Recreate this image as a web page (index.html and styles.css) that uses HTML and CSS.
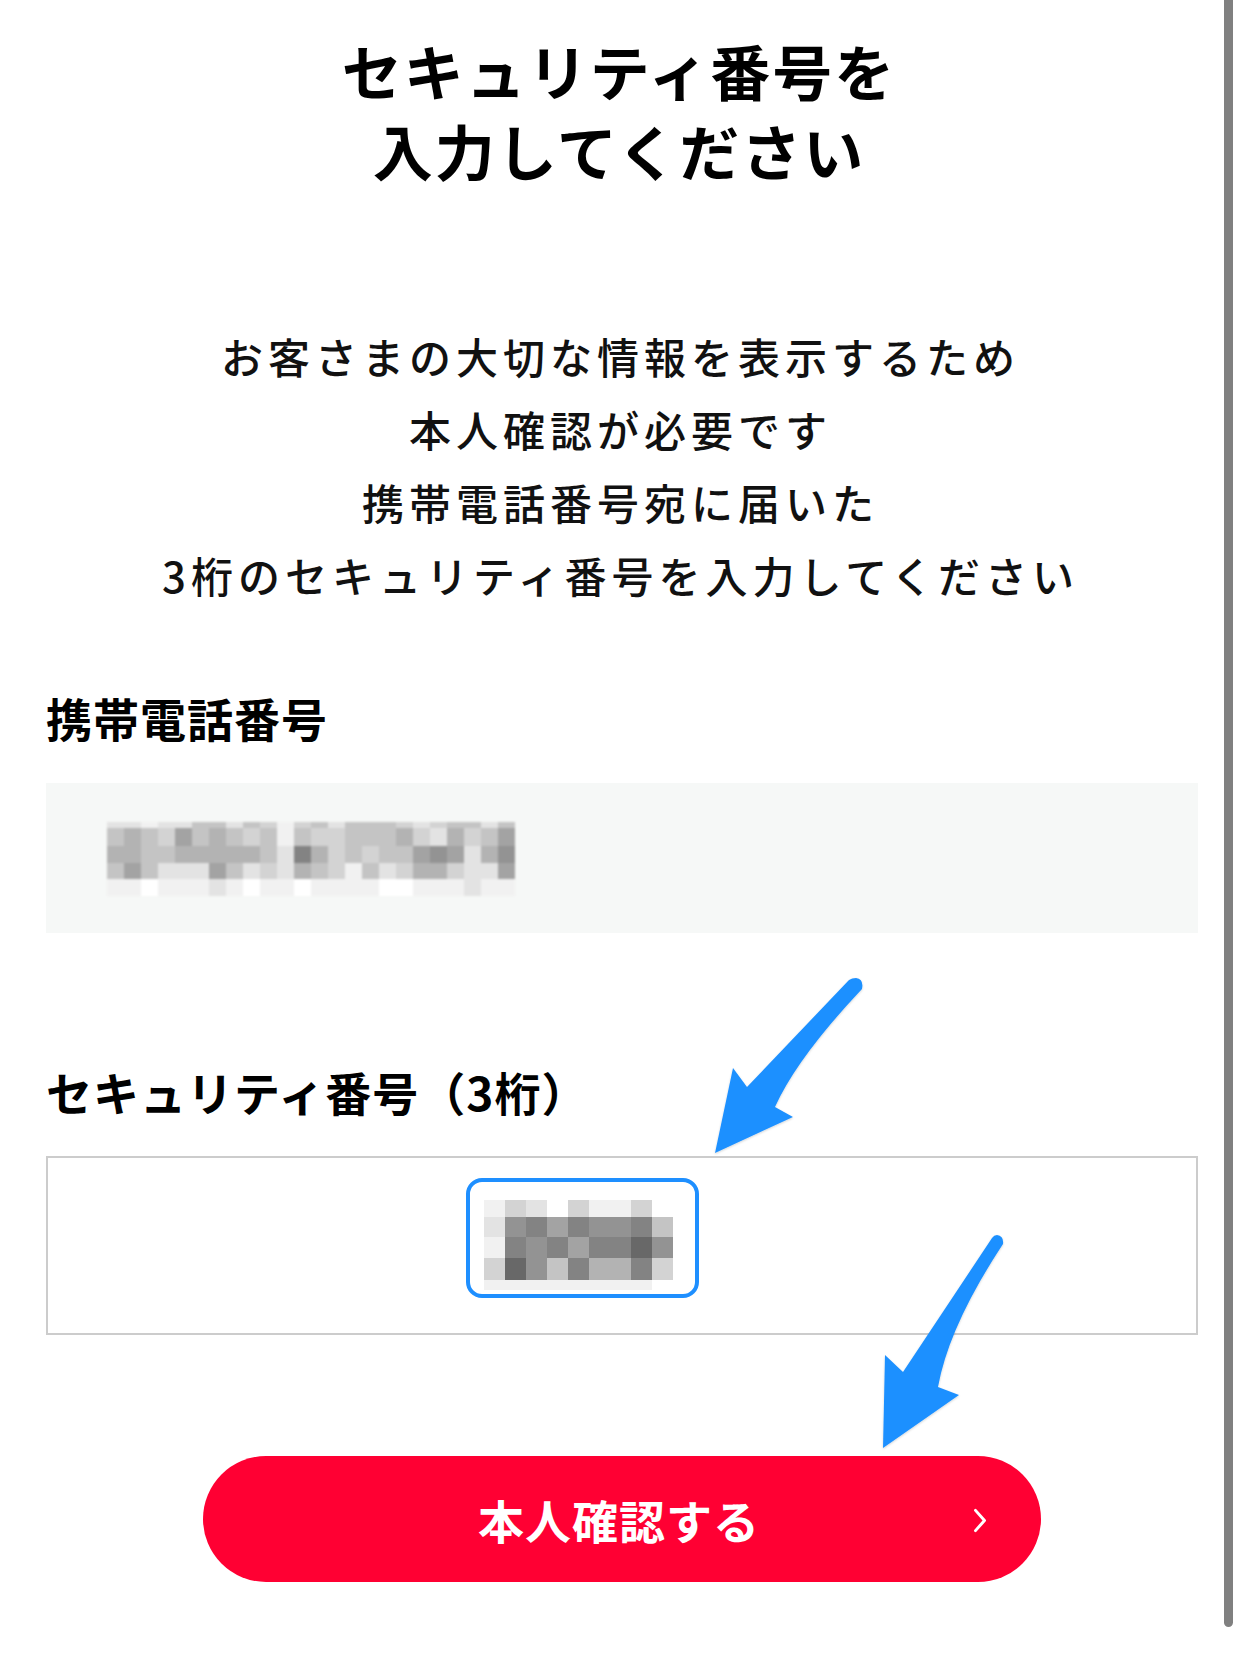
FILE: index.html
```html
<!DOCTYPE html>
<html lang="ja">
<head>
<meta charset="utf-8">
<title>セキュリティ番号を入力してください</title>
<link rel="stylesheet" href="styles.css">
</head>
<body>
<div class="page">
  <main class="content">
    <h1 class="title">セキュリティ番号を<br>入力してください</h1>
    <p class="lead">お客さまの大切な情報を表示するため<br>本人確認が必要です<br>携帯電話番号宛に届いた<br>3桁のセキュリティ番号を入力してください</p>

    <section class="field">
      <h2 class="label">携帯電話番号</h2>
      <div class="readonly">
        <div class="mosaic phone">
          <i class="s2"></i><i class="s2"></i><i class="s1"></i><i class="s2"></i><i class="s2"></i><i class="s4"></i><i class="s4"></i><i class="s2"></i><i class="s4"></i><i class="s3"></i><i class="s1"></i><i class="s3"></i><i class="s4"></i><i class="s2"></i><i class="s4"></i><i class="s4"></i><i class="s4"></i><i class="s3"></i><i class="s2"></i><i class="s3"></i><i class="s4"></i><i class="s4"></i><i class="s2"></i><i class="s4"></i>
          <i class="s4"></i><i class="s5"></i><i class="s4"></i><i class="s3"></i><i class="s6"></i><i class="s4"></i><i class="s5"></i><i class="s4"></i><i class="s3"></i><i class="s4"></i><i class="s1"></i><i class="s4"></i><i class="s3"></i><i class="s3"></i><i class="s4"></i><i class="s4"></i><i class="s4"></i><i class="s5"></i><i class="s3"></i><i class="s2"></i><i class="s5"></i><i class="s3"></i><i class="s4"></i><i class="s6"></i>
          <i class="s5"></i><i class="s5"></i><i class="s4"></i><i class="s4"></i><i class="s5"></i><i class="s5"></i><i class="s5"></i><i class="s5"></i><i class="s5"></i><i class="s4"></i><i class="s2"></i><i class="s8"></i><i class="s5"></i><i class="s3"></i><i class="s4"></i><i class="s3"></i><i class="s4"></i><i class="s4"></i><i class="s6"></i><i class="s7"></i><i class="s6"></i><i class="s2"></i><i class="s5"></i><i class="s7"></i>
          <i class="s4"></i><i class="s6"></i><i class="s4"></i><i class="s2"></i><i class="s2"></i><i class="s2"></i><i class="s6"></i><i class="s4"></i><i class="s2"></i><i class="s3"></i><i class="s2"></i><i class="s5"></i><i class="s4"></i><i class="s3"></i><i class="s1"></i><i class="s4"></i><i class="s2"></i><i class="s3"></i><i class="s5"></i><i class="s5"></i><i class="s3"></i><i class="s2"></i><i class="s2"></i><i class="s6"></i>
          <i class="s1"></i><i class="s1"></i><i class="s0"></i><i class="s1"></i><i class="s1"></i><i class="s1"></i><i class="s2"></i><i class="s1"></i><i class="s0"></i><i class="s1"></i><i class="s1"></i><i class="s0"></i><i class="s1"></i><i class="s1"></i><i class="s1"></i><i class="s1"></i><i class="s0"></i><i class="s0"></i><i class="s1"></i><i class="s1"></i><i class="s1"></i><i class="s2"></i><i class="s1"></i><i class="s1"></i>
        </div>
      </div>
    </section>

    <section class="field">
      <h2 class="label">セキュリティ番号（3桁）</h2>
      <div class="input">
        <div class="code-box">
          <div class="mosaic code">
            <i class="s1"></i><i class="s3"></i><i class="s2"></i><i class="s0"></i><i class="s3"></i><i class="s1"></i><i class="s1"></i><i class="s3"></i><i class="s0"></i>
            <i class="s2"></i><i class="s7"></i><i class="s8"></i><i class="s6"></i><i class="s8"></i><i class="s7"></i><i class="s7"></i><i class="s8"></i><i class="s4"></i>
            <i class="s1"></i><i class="s8"></i><i class="s7"></i><i class="s8"></i><i class="s6"></i><i class="s8"></i><i class="s8"></i><i class="s9"></i><i class="s7"></i>
            <i class="s3"></i><i class="s9"></i><i class="s7"></i><i class="s4"></i><i class="s8"></i><i class="s5"></i><i class="s5"></i><i class="s8"></i><i class="s3"></i>
            <i class="s1"></i><i class="s1"></i><i class="s1"></i><i class="s1"></i><i class="s1"></i><i class="s1"></i><i class="s1"></i><i class="s1"></i><i class="s0"></i>
          </div>
        </div>
      </div>
    </section>

    <button class="submit" type="button">
      <span class="submit-text">本人確認する</span>
      <svg class="chevron" viewBox="0 0 14 24" aria-hidden="true"><path d="M3 3 L11 12 L3 21" fill="none" stroke="#fff" stroke-width="2.6" stroke-linecap="round" stroke-linejoin="round"/></svg>
    </button>
  </main>

  <div class="scrollbar"></div>

  <svg class="annotations" viewBox="0 0 1242 1661" aria-hidden="true">
    <defs>
      <filter id="sh" x="-20%" y="-20%" width="140%" height="140%">
        <feDropShadow dx="0" dy="1" stdDeviation="1.2" flood-color="#000" flood-opacity="0.18"/>
      </filter>
    </defs>
    <path filter="url(#sh)" fill="#1e90ff" d="M849 980 L747 1087 L733 1068 L715 1153 L793 1117 L775 1107 Q797 1058 862 989 Q864 979 856 978 Q852 978 849 980 Z"/>
    <path filter="url(#sh)" fill="#1e90ff" d="M992 1238 L903 1372 L885 1355 L883 1448 L959 1395 L938 1387 Q949 1326 1003 1244 Q1004 1236 997 1235 Q994 1235 992 1238 Z"/>
  </svg>
</div>
</body>
</html>
```

FILE: styles.css
```css
* { box-sizing: border-box; }

html, body {
  margin: 0;
  padding: 0;
  background: #ffffff;
}

body {
  font-family: "Noto Sans CJK JP", "Noto Sans", sans-serif;
  color: #000;
}

.page {
  position: relative;
  width: 1242px;
  min-height: 1661px;
  overflow: hidden;
}

.content {
  display: flex;
  flex-direction: column;
  width: 1152px;
  margin-left: 46px;
  padding-top: 30px;
}

.title {
  margin: 0;
  padding-right: 6px;
  font-size: 60px;
  line-height: 80px;
  font-weight: 700;
  letter-spacing: 2px;
  text-align: center;
}

.lead {
  margin: 129px 0 0;
  padding-right: 3px;
  font-size: 42px;
  line-height: 73px;
  font-weight: 500;
  letter-spacing: 5px;
  text-align: center;
  color: #111;
}

.field {
  display: flex;
  flex-direction: column;
}

.field + .field .label { margin-top: 128px; }

.label {
  margin: 76px 0 0;
  font-size: 46px;
  line-height: 60px;
  font-weight: 700;
  letter-spacing: 1px;
}

.readonly {
  margin-top: 36px;
  height: 150px;
  background: #f6f8f7;
  padding: 39px 0 0 61px;
}

.input {
  margin-top: 35px;
  height: 179px;
  border: 2px solid #cccccc;
  background: #fff;
  padding: 20px 0 0 418px;
}

.code-box {
  width: 233px;
  height: 120px;
  border: 4px solid #1e8fff;
  border-radius: 16px;
  padding: 18px 0 0 14px;
}

.mosaic {
  display: grid;
}

.mosaic i { display: block; }

.phone {
  grid-template-columns: repeat(24, 17px);
  grid-template-rows: 6px 18px 17px 16px 17px;
  filter: blur(1px);
}

.code {
  grid-template-columns: repeat(9, 21px);
  grid-template-rows: 17px 20px 21px 22px 10px;
}

.s0 { background: #ffffff; }
.s1 { background: #f1f1f1; }
.s2 { background: #e3e3e3; }
.s3 { background: #d3d3d3; }
.s4 { background: #c4c4c4; }
.s5 { background: #b3b3b3; }
.s6 { background: #a3a3a3; }
.s7 { background: #939393; }
.s8 { background: #838383; }
.s9 { background: #686868; }

.submit {
  position: relative;
  align-self: center;
  margin-top: 121px;
  width: 838px;
  height: 126px;
  border: 0;
  border-radius: 63px;
  background: #ff0033;
  color: #fff;
  font-family: "Noto Sans CJK JP", "Noto Sans", sans-serif;
  font-size: 46px;
  font-weight: 700;
  letter-spacing: 1px;
  display: flex;
  align-items: center;
  justify-content: center;
  padding: 0;
}

.submit-text { margin-right: 6px; }

.chevron {
  position: absolute;
  right: 53px;
  top: 50%;
  width: 16px;
  height: 27px;
  margin-top: -12px;
}

.scrollbar {
  position: absolute;
  top: 0;
  right: 9px;
  width: 9px;
  height: 1627px;
  background: #808080;
  border-radius: 0 0 5px 5px;
}

.annotations {
  position: absolute;
  left: 0;
  top: 0;
  width: 1242px;
  height: 1661px;
  pointer-events: none;
}
```
